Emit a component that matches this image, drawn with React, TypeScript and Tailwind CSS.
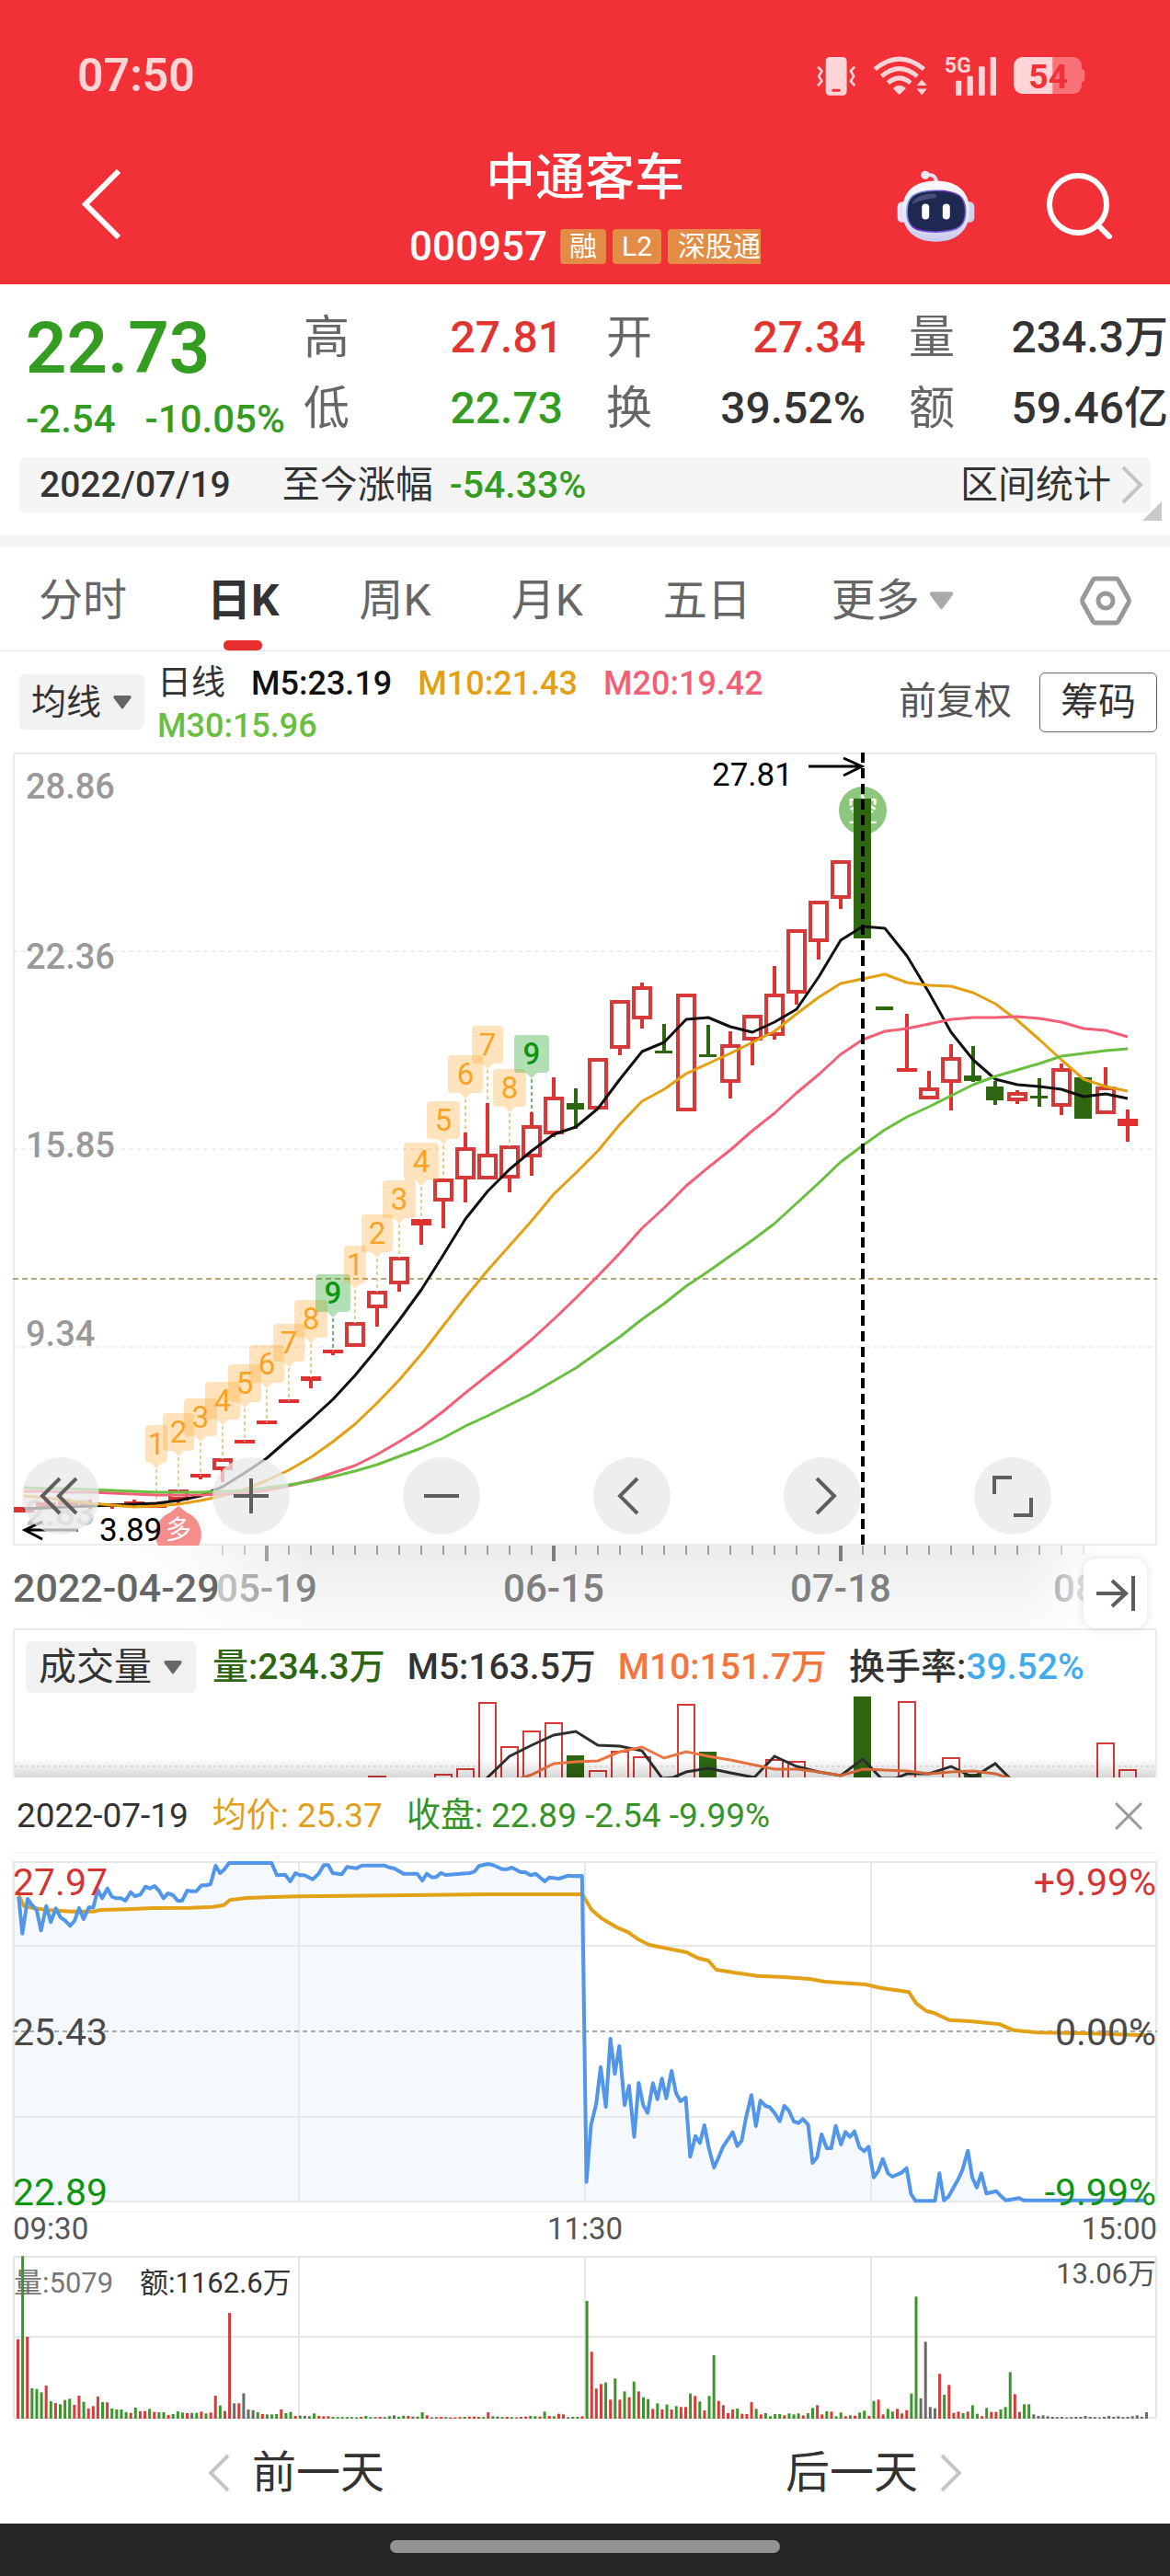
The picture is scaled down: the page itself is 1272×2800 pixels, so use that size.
import type { ReactNode } from "react";

/* ---------- daily candles ---------- */

const candleX = (i: number) => 26 + 24 * i;

// [index, colour, body top, body bottom, high, low]
type Candle = [number, "r" | "g", number, number, number, number];

const candles: Candle[] = [
  [0, "r", 1638, 1644, 1638, 1644],
  [1, "r", 1633, 1638, 1630, 1638],
  [2, "r", 1631, 1636, 1629, 1638],
  [3, "r", 1633, 1638, 1630, 1640],
  [4, "r", 1634, 1638, 1634, 1640],
  [5, "r", 1632, 1636, 1630, 1638],
  [6, "r", 1633, 1639, 1633, 1639],
  [7, "r", 1619, 1631, 1619, 1634],
  [8, "r", 1602, 1606, 1602, 1608],
  [9, "r", 1585, 1598, 1585, 1611],
  [10, "r", 1565, 1569, 1565, 1569],
  [11, "r", 1544, 1548, 1544, 1548],
  [12, "r", 1521, 1525, 1521, 1525],
  [13, "r", 1496, 1501, 1496, 1509],
  [14, "r", 1467, 1471, 1467, 1473],
  [15, "r", 1437, 1464, 1437, 1464],
  [16, "r", 1403, 1422, 1403, 1442],
  [17, "r", 1366, 1396, 1366, 1404],
  [18, "r", 1325, 1332, 1325, 1353],
  [19, "r", 1281, 1306, 1281, 1335],
  [20, "r", 1247, 1282, 1231, 1307],
  [21, "r", 1254, 1282, 1199, 1282],
  [22, "r", 1245, 1281, 1245, 1296],
  [23, "r", 1223, 1258, 1209, 1278],
  [24, "r", 1192, 1233, 1171, 1236],
  [25, "g", 1199, 1206, 1183, 1227],
  [26, "r", 1150, 1206, 1150, 1206],
  [27, "r", 1087, 1140, 1087, 1147],
  [28, "r", 1072, 1108, 1068, 1118],
  [29, "g", 1142, 1145, 1113, 1145],
  [30, "r", 1080, 1208, 1080, 1208],
  [31, "g", 1146, 1149, 1114, 1149],
  [32, "r", 1135, 1177, 1121, 1194],
  [33, "r", 1103, 1131, 1103, 1158],
  [34, "r", 1080, 1126, 1050, 1130],
  [35, "r", 1010, 1080, 1010, 1092],
  [36, "r", 979, 1024, 979, 1043],
  [37, "r", 935, 977, 935, 988],
  [38, "g", 868, 1020, 868, 1020],
  [39, "g", 1094, 1098, 1094, 1098],
  [40, "r", 1161, 1165, 1102, 1165],
  [41, "r", 1182, 1195, 1164, 1195],
  [42, "r", 1149, 1177, 1135, 1207],
  [43, "g", 1169, 1175, 1137, 1176],
  [44, "g", 1181, 1196, 1175, 1201],
  [45, "r", 1187, 1197, 1185, 1200],
  [46, "g", 1191, 1194, 1172, 1203],
  [47, "r", 1161, 1203, 1156, 1212],
  [48, "g", 1171, 1216, 1171, 1216],
  [49, "r", 1181, 1211, 1160, 1211],
  [50, "r", 1216, 1224, 1206, 1241],
];

// One value per candle.
const ma5 = [
  1640, 1639, 1638, 1637, 1636, 1635, 1634, 1631, 1626, 1616, 1601, 1585, 1564, 1543, 1521, 1495, 1466, 1435, 1402,
  1364, 1325, 1295, 1271, 1251, 1233, 1225, 1205, 1173, 1143, 1133, 1108, 1106, 1116, 1122, 1111, 1097, 1062, 1022,
  1007, 1009, 1039, 1079, 1122, 1152, 1173, 1179, 1181, 1184, 1192, 1189, 1194,
];
const ma10 = [
  1626, 1628, 1631, 1634, 1636, 1638, 1637, 1635, 1631, 1626, 1619, 1609, 1598, 1584, 1567, 1548, 1525, 1500, 1472,
  1441, 1410, 1381, 1354, 1327, 1298, 1275, 1251, 1222, 1197, 1184, 1167, 1156, 1145, 1133, 1121, 1102, 1084, 1069,
  1064, 1059, 1068, 1071, 1072, 1079, 1091, 1109, 1130, 1152, 1173, 1181, 1186,
];
const ma20 = [
  1621, 1621, 1622, 1622, 1623, 1624, 1625, 1625, 1625, 1624, 1623, 1620, 1615, 1609, 1601, 1593, 1581, 1567, 1552,
  1534, 1514, 1495, 1476, 1456, 1434, 1411, 1387, 1362, 1335, 1313, 1289, 1269, 1250, 1229, 1210, 1188, 1168, 1146,
  1130, 1121, 1118, 1113, 1108, 1106, 1106, 1105, 1107, 1111, 1118, 1120, 1127,
];
const ma30 = [
  1617, 1618, 1618, 1619, 1620, 1621, 1622, 1622, 1622, 1621, 1620, 1617, 1614, 1610, 1605, 1599, 1592, 1583, 1574,
  1563, 1550, 1539, 1527, 1515, 1501, 1487, 1470, 1453, 1434, 1417, 1398, 1382, 1365, 1348, 1330, 1308, 1286, 1263,
  1245, 1228, 1214, 1203, 1191, 1179, 1170, 1163, 1156, 1148, 1145, 1142, 1140,
];

const series = (values: number[]) => values.map((y, i) => `${candleX(i)},${y}`).join(" ");

// [index, digit, top, width]
const flags: [number, string, number, number][] = [
  [6, "1", 1549, 24],
  [7, "2", 1536, 34],
  [8, "3", 1520, 36],
  [9, "4", 1502, 38],
  [10, "5", 1483, 36],
  [11, "6", 1462, 38],
  [12, "7", 1439, 34],
  [13, "8", 1413, 36],
  [14, "9", 1385, 38],
  [15, "1", 1354, 24],
  [16, "2", 1320, 34],
  [17, "3", 1283, 36],
  [18, "4", 1242, 38],
  [19, "5", 1197, 36],
  [20, "6", 1147, 38],
  [21, "7", 1115, 34],
  [22, "8", 1162, 36],
  [23, "9", 1125, 38],
];

function Flag({ i, digit, top, width }: { i: number; digit: string; top: number; width: number }) {
  const x = candleX(i);
  const green = digit === "9";
  return (
    <g>
      <line
        x1={x}
        x2={x}
        y1={top + 48}
        y2={top + 84}
        stroke={green ? "#6fb574" : "#eccd8d"}
        strokeWidth={2}
        strokeDasharray="4 3"
      />
      <path
        fill={green ? "#16a01a" : "#ff9c12"}
        fillOpacity={green ? 0.33 : 0.28}
        d={`M${x - width / 2 + 4} ${top} h${width - 8} q4 0 4 4 v33 q0 4 -4 4 h${-(width - 20) / 2} L${x} ${top + 47} L${x - 6} ${top + 41} h${-(width - 20) / 2} q-4 0 -4 -4 v-33 q0 -4 4 -4 z`}
      />
      <text
        x={x}
        y={top + 32}
        textAnchor="middle"
        fontSize={33}
        fontWeight={green ? 500 : 400}
        fill={green ? "#0d960d" : "#f7a325"}
      >
        {digit}
      </text>
    </g>
  );
}

function CandleShape({ c }: { c: Candle }) {
  const [i, kind, top, bottom, high, low] = c;
  const x = candleX(i);
  const color = kind === "r" ? "#e0302f" : "#2e6612";
  const hollow = kind === "r" && bottom - top > 9;
  return (
    <g>
      {high < top && <line x1={x} x2={x} y1={high} y2={top} stroke={color} strokeWidth={4} />}
      {low > bottom && <line x1={x} x2={x} y1={bottom} y2={low} stroke={color} strokeWidth={4} />}
      {hollow ? (
        <rect
          x={x - 9}
          y={top + 2}
          width={18}
          height={bottom - top - 4}
          fill="#fff"
          stroke="#d63a38"
          strokeWidth={4}
        />
      ) : (
        <rect
          x={x - (kind === "r" ? 11 : 10)}
          y={top}
          width={kind === "r" ? 22 : 19}
          height={bottom - top}
          fill={color}
        />
      )}
    </g>
  );
}

const priceAxis: [string, number][] = [
  ["28.86", 868],
  ["22.36", 1053],
  ["15.85", 1258],
  ["9.34", 1463],
  ["2.83", 1658],
];

function CandleChart() {
  return (
    <svg
      viewBox="0 818 1272 862"
      className="block h-auto w-full"
      fontFamily="Roboto, 'Noto Sans CJK SC', sans-serif"
      role="img"
      aria-label="日K线图"
    >
      <rect x={15} y={819} width={1242} height={860} fill="#fff" stroke="#ececec" strokeWidth={2} />
      {[1034, 1249, 1464].map((y) => (
        <line key={y} x1={14} x2={1258} y1={y} y2={y} stroke="#dedede" strokeDasharray="5 4" />
      ))}
      <line x1={14} x2={1258} y1={1390} y2={1390} stroke="#b9a67a" strokeWidth={2} strokeDasharray="6 4" />
      {priceAxis.map(([label, y]) => (
        <text key={label} x={28} y={y} fontSize={38} fontWeight={500} fill={label === "2.83" ? "#c4c4c4" : "#999"}>
          {label}
        </text>
      ))}

      <circle cx={938} cy={881} r={26} fill="#8dc67f" />
      <text x={938} y={893} textAnchor="middle" fontSize={34} fill="#fff">
        空
      </text>
      <path d="M194 1637 L203 1644 A26 26 0 0 1 216 1680 H172 A26 26 0 0 1 185 1644 Z" fill="#f58d8b" />
      <text x={194} y={1673} textAnchor="middle" fontSize={28} fill="#fff">
        多
      </text>

      {candles.map((c) => (
        <CandleShape key={c[0]} c={c} />
      ))}
      {flags.map(([i, digit, top, width]) => (
        <Flag key={i} i={i} digit={digit} top={top} width={width} />
      ))}

      <g fill="none" strokeWidth={3} strokeLinejoin="round">
        <polyline points={series(ma5)} stroke="#111" />
        <polyline points={series(ma10)} stroke="#e3a013" />
        <polyline points={series(ma20)} stroke="#f25f76" />
        <polyline points={series(ma30)} stroke="#6abf40" />
      </g>

      <line x1={938} x2={938} y1={818} y2={1680} stroke="#000" strokeWidth={4} strokeDasharray="11 6" />
      <g fill="#000" fontSize={35}>
        <text x={774} y={854}>
          27.81
        </text>
        <text x={108} y={1675}>
          3.89
        </text>
      </g>
      <g fill="none" stroke="#000" strokeWidth={3}>
        <path d="M879 833 H936 M917 824 L937 833 L917 843" />
        <path d="M85 1663 H28 M46 1654 L27 1663 L46 1673" />
      </g>
    </svg>
  );
}

function TimeAxis() {
  const major = [11, 24, 37];
  const ticks = Array.from({ length: 40 }, (_, k) => k + 9);
  return (
    <svg
      viewBox="0 1680 1272 90"
      className="block h-auto w-full"
      fontFamily="Roboto, 'Noto Sans CJK SC', sans-serif"
      fontSize={42}
      role="img"
      aria-label="时间轴"
    >
      <defs>
        <linearGradient id="axisDown" x1="0" y1="0" x2="0" y2="1">
          <stop offset="0" stopColor="#ececec" />
          <stop offset="1" stopColor="#fbfbfb" />
        </linearGradient>
        <linearGradient id="axisLeft" x1="0" x2="1">
          <stop offset="0" stopColor="#fff" />
          <stop offset="0.55" stopColor="#fff" stopOpacity="0.85" />
          <stop offset="1" stopColor="#fff" stopOpacity="0" />
        </linearGradient>
        <linearGradient id="axisRight" x1="0" x2="1">
          <stop offset="0" stopColor="#fff" stopOpacity="0" />
          <stop offset="1" stopColor="#fff" />
        </linearGradient>
      </defs>
      <rect x={0} y={1680} width={1272} height={90} fill="url(#axisDown)" />
      {ticks.map((i) =>
        major.includes(i) ? (
          <line key={i} x1={candleX(i)} x2={candleX(i)} y1={1680} y2={1697} stroke="#7d7d7d" strokeWidth={4} />
        ) : (
          <line key={i} x1={candleX(i)} x2={candleX(i)} y1={1680} y2={1690} stroke="#9b9b9b" strokeWidth={2} />
        ),
      )}
      <g fill="#808080" fontWeight={500} textAnchor="middle">
        <text x={290} y={1741}>
          05-19
        </text>
        <text x={602} y={1741}>
          06-15
        </text>
        <text x={914} y={1741}>
          07-18
        </text>
        <text x={1200} y={1741}>
          08-12
        </text>
      </g>
      <rect x={0} y={1680} width={340} height={90} fill="url(#axisLeft)" />
      <rect x={1110} y={1680} width={90} height={90} fill="url(#axisRight)" />
      <rect x={1200} y={1680} width={72} height={90} fill="#fff" />
      <text x={14} y={1741} fontWeight={500} fontSize={43} fill="#666">
        2022-04-29
      </text>
    </svg>
  );
}

/* ---------- daily volume ---------- */

const dailyVolume: [number, "r" | "g", number][] = [
  [16, "r", 1930],
  [19, "r", 1928],
  [20, "r", 1922],
  [21, "r", 1850],
  [22, "r", 1898],
  [23, "r", 1881],
  [24, "r", 1872],
  [25, "g", 1908],
  [26, "r", 1924],
  [27, "r", 1903],
  [28, "r", 1909],
  [30, "r", 1852],
  [31, "g", 1904],
  [34, "r", 1912],
  [35, "r", 1914],
  [38, "g", 1844],
  [40, "r", 1849],
  [42, "r", 1910],
  [43, "g", 1928],
  [49, "r", 1894],
  [50, "r", 1923],
];

function DailyVolume() {
  return (
    <svg viewBox="16 1840 1240 92" className="block h-auto w-full" role="img" aria-label="成交量">
      <defs>
        <linearGradient id="fold" x1="0" y1="0" x2="0" y2="1">
          <stop offset="0" stopColor="#000" stopOpacity="0" />
          <stop offset="1" stopColor="#000" stopOpacity="0.16" />
        </linearGradient>
      </defs>
      <line x1={16} x2={1256} y1={1920} y2={1920} stroke="#cfcfcf" strokeDasharray="3 3" />
      {dailyVolume.map(([i, kind, top]) =>
        kind === "g" ? (
          <rect key={i} x={candleX(i) - 10} y={top} width={19} height={110} fill="#2e6612" />
        ) : (
          <rect
            key={i}
            x={candleX(i) - 9}
            y={top + 1}
            width={18}
            height={110}
            fill="#fff"
            stroke="#d63a38"
            strokeWidth={2}
          />
        ),
      )}
      <g fill="none" strokeWidth={3}>
        <polyline
          stroke="#2f2f2f"
          points="529,1933 554,1909 578,1897 602,1886 626,1882 650,1897 674,1898 698,1903 720,1933 732,1932 746,1926 770,1922 794,1927 820,1932 842,1909 866,1920 890,1926 914,1930 938,1912 958,1933 974,1933 986,1928 1010,1928 1034,1920 1058,1932 1082,1917 1098,1933"
        />
        <polyline
          stroke="#ee7540"
          points="566,1933 578,1929 602,1917 626,1915 650,1914 674,1904 698,1899 722,1911 746,1904 770,1909 794,1913 818,1918 842,1923 866,1923 890,1926 914,1930 938,1923 962,1924 986,1925 1010,1928 1034,1926 1058,1925 1082,1928 1098,1933"
        />
      </g>
      <rect x={16} y={1912} width={1240} height={20} fill="url(#fold)" />
    </svg>
  );
}

/* ---------- intraday ---------- */

// Samples as "x y" on a 1568 x 1560 plotting grid.
const priceSamples =
  "25 425,30 545,37 432,42 450,49 468,55 535,62 455,68 508,75 463,81 492,87 502,94 520,100 503,106 462,112 498,119 460,125 460,131 403,137 430,144 398,150 425,156 430,162 430,168 438,175 410,181 423,188 418,195 392,201 398,207 390,213 405,219 430,225 414,232 420,238 438,244 438,251 405,257 407,263 407,270 388,276 388,282 384,289 324,295 348,301 335,307 315,364 315,371 355,382 353,389 375,396 348,402 355,408 355,419 368,427 350,434 322,440 322,446 348,458 352,465 328,478 332,485 323,515 323,522 330,528 332,541 350,559 350,566 372,572 350,579 362,585 360,591 347,597 354,629 348,636 343,642 325,654 318,661 322,673 335,680 335,686 330,698 345,704 345,711 355,718 350,730 375,736 362,749 366,762 356,768 358,780 357,786 1355,792 1170,799 1100,805 980,812 1110,818 888,824 1003,830 912,837 1105,843 1042,850 1208,856 1032,862 1105,868 1130,875 1033,881 1085,887 1018,893 1082,900 993,906 1065,912 1092,919 1080,925 1273,932 1205,938 1228,944 1170,950 1245,957 1308,963 1275,969 1240,982 1193,988 1238,994 1220,1000 1143,1007 1072,1013 1173,1019 1090,1026 1107,1032 1112,1038 1130,1045 1157,1051 1107,1057 1122,1064 1158,1070 1163,1076 1150,1083 1168,1089 1293,1095 1275,1101 1200,1108 1245,1114 1245,1120 1172,1127 1233,1133 1192,1139 1208,1145 1190,1152 1243,1158 1255,1164 1240,1171 1340,1177 1320,1183 1280,1190 1327,1196 1338,1208 1325,1215 1310,1221 1395,1227 1417,1253 1417,1259 1327,1265 1415,1271 1403,1284 1347,1290 1315,1297 1253,1303 1340,1309 1373,1315 1327,1322 1393,1335 1385,1341 1400,1348 1415,1366 1408,1372 1415,1535 1415";

const averageSamples =
  "25 420,32 455,45 462,62 468,95 473,125 473,135 468,170 466,205 462,255 461,285 458,300 452,308 436,330 429,365 426,400 424,520 421,650 417,780 417,783 428,793 468,806 495,825 523,842 541,856 565,870 582,890 592,920 606,935 625,949 633,960 663,985 673,1015 683,1050 687,1085 693,1105 702,1160 711,1180 722,1218 736,1228 773,1241 797,1251 803,1272 827,1300 831,1340 841,1358 860,1390 868,1450 870,1500 874,1535 877";

const plot = (samples: string) =>
  samples
    .split(",")
    .map((pair) => {
      const [x, y] = pair.split(" ").map(Number);
      return `${((x * 1272) / 1568).toFixed(1)},${(1920 + y / 3).toFixed(1)}`;
    })
    .join(" ");

function IntradayChart() {
  const price = plot(priceSamples);
  return (
    <svg
      viewBox="0 2013 1272 392"
      className="block h-auto w-full"
      fontFamily="Roboto, sans-serif"
      fontSize={41}
      role="img"
      aria-label="分时图"
    >
      <rect x={14} y={2014} width={1244} height={390} fill="#fff" stroke="#f3f3f3" strokeWidth={1} />
      <polygon points={`15,2393 15,2061 ${price} 1245,2393`} fill="#f5f9fe" />
      <g stroke="#e6e8ea" strokeWidth={2}>
        <path d="M14 2024 H1258 M14 2115 H1258 M14 2301 H1258 M14 2393 H1258" />
        <path d="M15 2024 V2393 M325 2024 V2393 M636 2024 V2393 M947 2024 V2393 M1257 2024 V2393" />
      </g>
      <line x1={14} x2={1258} y1={2208} y2={2208} stroke="#a5a8ab" strokeWidth={2} strokeDasharray="5 4" />
      <polyline points={plot(averageSamples)} fill="none" stroke="#e3a118" strokeWidth={4} strokeLinejoin="round" />
      <polyline points={price} fill="none" stroke="#5196e8" strokeWidth={4} strokeLinejoin="round" />
      <text x={14} y={2060} fill="#d63434">
        27.97
      </text>
      <text x={14} y={2223} fill="#4a4a4a">
        25.43
      </text>
      <text x={14} y={2397} fill="#0e9410">
        22.89
      </text>
      <g textAnchor="end">
        <text x={1257} y={2060} fill="#d63434">
          +9.99%
        </text>
        <text x={1257} y={2223} fill="#4a4a4a">
          0.00%
        </text>
        <text x={1257} y={2397} fill="#0e9410">
          -9.99%
        </text>
      </g>
    </svg>
  );
}

// One bar per minute: colour letter and height.
const minuteVolume =
  "r259 g530 r267 g99 g97 g86 r108 g57 r51 g47 g61 g65 r45 r75 g55 r33 r41 r72 g54 r53 g33 g30 g30 g21 r19 g36 r24 r25 g32 r22 g21 g21 r12 g15 g24 g20 r18 k19 g19 r23 g17 r20 r75 g43 r25 r345 k50 r50 k83 k30 k28 g21 r15 g14 g14 g15 r30 g18 g22 r9 g10 k9 g8 g17 r9 r8 r8 g6 g5 k5 g5 g5 g4 r6 g9 g5 k5 r6 k5 g8 k11 g6 g10 r9 k7 g7 g21 r11 k4 r5 r6 g5 r4 r4 r5 g6 r7 r7 r6 g5 r21 g8 k7 g5 r6 g5 r4 k6 r7 g9 g8 r7 g23 r9 g8 r16 r14 k5 g6 g6 r8 g384 r218 r98 r113 g118 r62 g131 r62 g89 r70 g121 r89 g70 g64 r32 g50 r30 g46 r30 g41 r38 r38 g82 r74 g56 r27 g74 g207 r58 r44 r18 r30 g33 r16 r15 r54 g32 r14 g18 g8 g15 g15 r11 g17 g14 g17 r11 g18 g35 r44 r14 g24 r23 g8 g20 r8 g11 r10 g20 g26 r9 g58 r62 r14 g32 g23 r32 r17 r28 g82 g398 k66 k251 k38 k34 r146 g78 r110 r19 r23 g18 r23 g44 g16 r8 g35 r22 r22 g30 g38 g152 r80 r22 g47 g47 k14 k9 k11 k8 k6 k5 k6 k4 k5 k6 k6 k9 k6 k5 k4 k6 k9 k6 k8 k5 k6 k8 k11 k6 k21";

const barColor: Record<string, string> = { r: "#d93a38", g: "#3a962a", k: "#6a6a6a" };

function MinuteVolume() {
  const bars = minuteVolume.split(" ");
  return (
    <svg
      viewBox="0 2452 1272 178"
      className="block h-auto w-full"
      fontFamily="Roboto, 'Noto Sans CJK SC', sans-serif"
      fontSize={31}
      role="img"
      aria-label="分时成交量"
    >
      <g stroke="#e6e6e6" strokeWidth={2} fill="none">
        <rect x={15} y={2453} width={1242} height={175} />
        <path d="M14 2540 H1258 M325 2452 V2629 M636 2452 V2629 M947 2452 V2629" />
      </g>
      <text x={15} y={2492} fill="#777">
        量:5079
      </text>
      <text x={152} y={2492} fill="#333">
        额:1162.6万
      </text>
      <text x={1257} y={2482} textAnchor="end" fill="#555">
        13.06万
      </text>
      {bars.map((bar, n) => {
        const slot = n === bars.length - 1 ? 240 : n;
        const height = Number(bar.slice(1)) / 3;
        return (
          <rect
            key={n}
            x={18 + (slot * 1227) / 240}
            y={2629 - height}
            width={3}
            height={height}
            fill={barColor[bar[0]]}
          />
        );
      })}
    </svg>
  );
}

/* ---------- icons ---------- */

function VibrateIcon() {
  return (
    <svg viewBox="52 60 132 130" className="h-[43px] w-[44px]" aria-label="振动">
      <rect x={84} y={63} width={69} height={126} rx={13} fill="#fdd5d7" />
      <rect x={104} y={168} width={28} height={9} rx={4} fill="#f23038" />
      <path
        d="M58 95 L71 109 L61 126 L71 142 L58 157 M179 95 L166 109 L176 126 L166 142 L179 157"
        fill="none"
        stroke="#fdd5d7"
        strokeWidth={8}
        strokeLinejoin="round"
      />
    </svg>
  );
}

function WifiIcon() {
  return (
    <svg viewBox="242 60 180 130" className="h-[43px] w-[60px]" aria-label="无线网络">
      <g fill="none" stroke="#fdd5d7" strokeWidth={15}>
        <path d="M248 103 Q328 36 409 103" />
        <path d="M270 126 Q328 76 387 126" />
        <path d="M291 148 Q328 116 365 148" />
      </g>
      <path d="M307 166 Q328 146 350 166 L331 185 Q328 188 325 185 Z" fill="#fdd5d7" />
      <path d="M402 137 L419 157 H385 Z M385 167 H419 L402 188 Z" fill="#fdd5d7" />
    </svg>
  );
}

function SignalIcon() {
  return (
    <svg viewBox="468 57 170 133" className="h-[44px] w-[57px] overflow-visible" aria-label="5G">
      <text x={466} y={114} fontFamily="Roboto, sans-serif" fontSize={70} fontWeight={700} fill="#fdd5d7">
        5G
      </text>
      <g fill="#fdd5d7">
        <rect x={503} y={141} width={19} height={48} rx={3} />
        <rect x={541} y={126} width={19} height={63} rx={3} />
        <rect x={579} y={94} width={20} height={95} rx={3} />
        <rect x={617} y={63} width={19} height={126} rx={3} />
      </g>
    </svg>
  );
}

function BatteryIcon() {
  return (
    <svg viewBox="698 66 234 126" className="h-[42px] w-[78px] overflow-visible" aria-label="电量 54">
      <rect x={699} y={69} width={221} height={120} rx={28} fill="#f97277" />
      <path d="M918 107 q12 2 12 12 v20 q0 10 -12 12 z" fill="#f97277" />
      <path d="M825 69 H727 a28 28 0 0 0 -28 28 v64 a28 28 0 0 0 28 28 H825 Z" fill="#fdd5d7" />
      <text
        x={811}
        y={170}
        textAnchor="middle"
        fontFamily="Roboto, sans-serif"
        fontSize={112}
        fontWeight={700}
        fill="#f23038"
      >
        54
      </text>
    </svg>
  );
}

function RobotIcon() {
  return (
    <svg viewBox="313 427 256 235" className="h-[78px] w-[85px]" aria-hidden="true">
      <defs>
        <linearGradient id="shell" x1="0" y1="0" x2="0" y2="1">
          <stop offset="0" stopColor="#fbfafd" />
          <stop offset="0.6" stopColor="#e6e5f6" />
          <stop offset="1" stopColor="#c9caed" />
        </linearGradient>
        <linearGradient id="rim" x1="0" y1="0" x2="1" y2="0.5">
          <stop offset="0" stopColor="#8fd8e6" />
          <stop offset="0.5" stopColor="#6a2fc0" />
          <stop offset="1" stopColor="#7a5fe0" />
        </linearGradient>
      </defs>
      <path d="M406 443 Q440 436 443 468" fill="none" stroke="#e3e0f5" strokeWidth={12} />
      <circle cx={406} cy={443} r={14} fill="#ece8f6" />
      <rect x={315} y={530} width={36} height={68} rx={16} fill="#e3e0f3" />
      <rect x={531} y={530} width={36} height={68} rx={16} fill="#d5d0ee" />
      <path
        d="M441 462 C520 462 551 505 551 562 C551 622 510 661 441 661 C372 661 331 622 331 562 C331 505 362 462 441 462 Z"
        fill="url(#shell)"
      />
      <path
        d="M441 494 C516 494 538 515 538 562 C538 609 516 629 441 629 C366 629 346 609 346 562 C346 515 366 494 441 494 Z"
        fill="#1f2850"
        stroke="url(#rim)"
        strokeWidth={5}
      />
      <path d="M362 540 Q372 508 425 504 Q452 504 440 518 Q396 520 362 540 Z" fill="#48507a" />
      <rect x={395} y={537} width={24} height={51} rx={12} fill="#fff" />
      <rect x={463} y={537} width={24} height={51} rx={12} fill="#fff" />
    </svg>
  );
}

function Caret({ className }: { className: string }) {
  return (
    <svg viewBox="0 0 22 16" className={className} aria-hidden="true">
      <path d="M2 0 H20 Q22 1 21 3 L12 15 Q11 16 10 15 L1 3 Q0 1 2 0 Z" fill="currentColor" />
    </svg>
  );
}

function Chevron({ dir, className }: { dir: "left" | "right"; className: string }) {
  return (
    <svg viewBox="0 0 24 42" className={className} aria-hidden="true">
      <path
        d={dir === "left" ? "M22 2 L3 21 L22 40" : "M2 2 L21 21 L2 40"}
        fill="none"
        stroke="currentColor"
        strokeWidth={4}
      />
    </svg>
  );
}

/* ---------- page ---------- */

function Quote({ label, value, tone }: { label: string; value: string; tone: string }) {
  return (
    <div className="flex items-center justify-between whitespace-nowrap text-[48px] leading-[60px]">
      <dt className="text-[50px] text-[#666]">{label}</dt>
      <dd className={`font-medium ${tone}`}>{value}</dd>
    </div>
  );
}

function RoundButton({ label, children }: { label: string; children: ReactNode }) {
  return (
    <button
      type="button"
      aria-label={label}
      className="flex size-[84px] items-center justify-center rounded-full bg-[#e8e8e8]/75"
    >
      <svg viewBox="0 0 84 84" className="size-full" fill="none" stroke="#5e5e5e" strokeWidth={4}>
        {children}
      </svg>
    </button>
  );
}

const tabs = ["分时", "日K", "周K", "月K", "五日"];

export default function App() {
  return (
    <div className="flex w-full flex-col bg-white font-['Roboto','Noto_Sans_CJK_SC',sans-serif] text-[#333]">
      <header className="bg-[#f23038] pb-[17px] text-white">
        <div className="flex items-center justify-between pl-[84px] pr-[92px] pt-[58px]">
          <time className="text-[50px] font-semibold leading-[48px] text-[#fdd5d7]">07:50</time>
          <div className="flex items-center gap-[18px]">
            <VibrateIcon />
            <WifiIcon />
            <SignalIcon />
            <BatteryIcon />
          </div>
        </div>
        <div className="grid grid-cols-[1fr_auto_1fr] items-center pt-[58px]">
          <button type="button" aria-label="返回" className="ml-[88px] justify-self-start pb-3">
            <svg viewBox="0 0 44 76" className="h-[76px] w-[44px]" fill="none" stroke="#fff" strokeWidth={6}>
              <path d="M41 2 L5 38 L41 74" />
            </svg>
          </button>
          <div className="flex flex-col items-center gap-[20px]">
            <h1 className="text-[54px] font-medium leading-[60px]">中通客车</h1>
            <div className="flex items-center gap-[7px] text-[30px] leading-[38px]">
              <span className="mr-[7px] text-[44px] font-medium leading-[48px]">000957</span>
              <span className="rounded-[4px] bg-[#e28c46] px-[10px]">融</span>
              <span className="rounded-[4px] bg-[#e28c46] px-[10px]">L2</span>
              <span className="rounded-l-[4px] bg-[#e28c46] pl-[11px]">深股通</span>
            </div>
          </div>
          <div className="mr-[62px] flex items-center gap-[78px] justify-self-end pb-2">
            <button type="button" aria-label="智能助手">
              <RobotIcon />
            </button>
            <button type="button" aria-label="搜索">
              <svg viewBox="0 0 72 72" className="size-[72px]" fill="none" stroke="#fff" strokeWidth={6}>
                <circle cx={34} cy={34} r={31} />
                <path d="M55 56 L68 69" strokeLinecap="round" />
              </svg>
            </button>
          </div>
        </div>
      </header>

      <section className="relative border-b-[14px] border-[#f4f4f4] pb-6 pt-7">
        <div className="flex">
          <div className="flex w-[330px] flex-col gap-2 pl-[28px] text-[#359c22]">
            <strong className="text-[78px] font-semibold leading-[84px]">22.73</strong>
            <div className="flex gap-[32px] whitespace-nowrap text-[42px] font-medium leading-[54px]">
              <span>-2.54</span>
              <span>-10.05%</span>
            </div>
          </div>
          <dl className="grid flex-1 grid-cols-3 content-start gap-x-[47px] gap-y-[17px] pr-[2px]">
            <Quote label="高" value="27.81" tone="text-[#e13532]" />
            <Quote label="开" value="27.34" tone="text-[#e13532]" />
            <Quote label="量" value="234.3万" tone="text-[#333]" />
            <Quote label="低" value="22.73" tone="text-[#359c22]" />
            <Quote label="换" value="39.52%" tone="text-[#333]" />
            <Quote label="额" value="59.46亿" tone="text-[#333]" />
          </dl>
        </div>
        <div className="mx-[21px] mt-[14px] flex items-center rounded-[6px] bg-[#f5f5f5] pl-[22px] pr-2 text-[41px] leading-[60px]">
          <span className="mr-[56px] text-[39px] font-medium">2022/07/19</span>
          <span className="mr-[18px]">至今涨幅</span>
          <span className="font-medium text-[#359c22]">-54.33%</span>
          <a href="#range" className="ml-auto flex items-center gap-[11px]">
            区间统计
            <Chevron dir="right" className="h-[42px] w-[24px] text-[#c4c4c4]" />
          </a>
        </div>
        <svg viewBox="0 0 21 21" className="absolute bottom-[15px] right-[9px] size-[21px]" aria-hidden="true">
          <path d="M21 0 V21 H0 Z" fill="#c9c9c9" />
        </svg>
      </section>

      <nav className="flex items-start border-b border-[#e2e2e2] pl-[42px] pr-[41px] pt-[30px] text-[48px] leading-[56px] text-[#666]">
        <div className="flex gap-[87px]">
          {tabs.map((tab) => (
            <button
              key={tab}
              type="button"
              className={
                tab === "日K"
                  ? "flex flex-col items-center gap-[15px] font-bold text-[#333] after:h-[11px] after:w-[42px] after:rounded-[5px] after:bg-[#e62f2e]"
                  : "flex flex-col items-center"
              }
            >
              {tab}
            </button>
          ))}
          <button type="button" className="flex items-center gap-[10px] self-start">
            更多
            <Caret className="h-[22px] w-[27px] text-[#aaa]" />
          </button>
        </div>
        <button type="button" aria-label="设置" className="ml-auto">
          <svg viewBox="0 0 58 56" className="h-[56px] w-[58px]" fill="none" stroke="#999" strokeWidth={5}>
            <path d="M18 4 H40 Q42 4 43 6 L54 26 Q55 28 54 30 L43 50 Q42 52 40 52 H18 Q16 52 15 50 L4 30 Q3 28 4 26 L15 6 Q16 4 18 4 Z" />
            <circle cx={29} cy={28} r={8} />
          </svg>
        </button>
      </nav>

      <div className="flex items-center px-[14px] py-[6px]">
        <button
          type="button"
          className="ml-[7px] flex items-center gap-[12px] whitespace-nowrap rounded-[6px] bg-[#f2f2f2] px-[13px] text-[38px] leading-[60px]"
        >
          均线
          <Caret className="h-[15px] w-[22px] text-[#666]" />
        </button>
        <div className="ml-[14px] flex flex-1 flex-wrap gap-x-[28px] pt-[6px] text-[36px] leading-[46px]">
          <span className="text-[37px]">日线</span>
          <span className="font-medium text-[#111]">M5:23.19</span>
          <span className="font-medium text-[#e3a013]">M10:21.43</span>
          <span className="font-medium text-[#f25f76]">M20:19.42</span>
          <span className="font-medium text-[#6abf40]">M30:15.96</span>
        </div>
        <div className="flex items-center gap-[30px] whitespace-nowrap text-[41px]">
          <button type="button" className="text-[#555]">
            前复权
          </button>
          <button type="button" className="rounded-[6px] border border-[#666] px-[22px] leading-[63px]">
            筹码
          </button>
        </div>
      </div>

      <div className="relative">
        <CandleChart />
        <div className="absolute bottom-[12px] left-[24px] flex gap-[123px]">
          <RoundButton label="最左">
            <path d="M41 23 L22 42 L41 61 M59 23 L40 42 L59 61" />
          </RoundButton>
          <RoundButton label="放大">
            <path d="M23 42 H61 M42 23 V61" />
          </RoundButton>
          <RoundButton label="缩小">
            <path d="M23 42 H61" />
          </RoundButton>
          <RoundButton label="向左">
            <path d="M48 23 L29 42 L48 61" />
          </RoundButton>
          <RoundButton label="向右">
            <path d="M36 23 L55 42 L36 61" />
          </RoundButton>
          <RoundButton label="全屏">
            <path d="M22 40 V22 H41 M43 63 H62 V44" />
          </RoundButton>
        </div>
      </div>

      <div className="relative">
        <TimeAxis />
        <button
          type="button"
          aria-label="最新"
          className="absolute right-[25px] top-[14px] rounded-[14px] bg-white px-[12px] py-[17px] shadow-[0_0_10px_rgba(0,0,0,0.12)]"
        >
          <svg viewBox="0 0 45 42" className="h-[42px] w-[45px]" fill="none" stroke="#5e5e5e" strokeWidth={4}>
            <path d="M2 21 H34 M19 7 L34 21 L19 35 M42 2 V40" />
          </svg>
        </button>
      </div>

      <section className="mx-[14px] border-x-2 border-t-2 border-[#ececec]">
        <div className="flex items-center gap-[24px] whitespace-nowrap pl-[12px] pt-[12px] text-[39px] font-medium leading-[56px]">
          <button
            type="button"
            className="-mr-[6px] flex items-center gap-[12px] rounded-[6px] bg-[#f1f1f1] px-[14px] text-[41px] font-normal"
          >
            成交量
            <Caret className="h-[15px] w-[22px] text-[#666]" />
          </button>
          <span className="text-[#2e6612]">量:234.3万</span>
          <span>M5:163.5万</span>
          <span className="text-[#f3743c]">M10:151.7万</span>
          <span>
            换手率:<span className="text-[#41abee]">39.52%</span>
          </span>
        </div>
        <DailyVolume />
      </section>

      <section className="bg-white">
        <div className="flex items-center gap-[26px] pb-[15px] pl-[18px] pr-[30px] pt-[18px] text-[37px] leading-[48px]">
          <span>2022-07-19</span>
          <span className="text-[#e0a01c]">均价: 25.37</span>
          <span className="text-[#35942a]">收盘: 22.89 -2.54 -9.99%</span>
          <button type="button" aria-label="关闭" className="ml-auto">
            <svg viewBox="0 0 30 30" className="size-[30px]" fill="none" stroke="#999" strokeWidth={3}>
              <path d="M1 1 L29 29 M29 1 L1 29" />
            </svg>
          </button>
        </div>
        <IntradayChart />
        <div className="grid grid-cols-3 px-[14px] text-[33px] leading-[36px] text-[#555]">
          <span>09:30</span>
          <span className="text-center">11:30</span>
          <span className="text-right">15:00</span>
        </div>
        <div className="pt-[11px]">
          <MinuteVolume />
        </div>
        <div className="grid grid-cols-2 justify-items-center px-2 pb-[25px] pt-7 text-[48px] leading-[60px]">
          <button type="button" className="flex items-center gap-[24px]">
            <Chevron dir="left" className="h-[42px] w-[24px] text-[#c8c8c8]" />
            前一天
          </button>
          <button type="button" className="flex items-center gap-[24px]">
            后一天
            <Chevron dir="right" className="h-[42px] w-[24px] text-[#c8c8c8]" />
          </button>
        </div>
      </section>

      <footer className="flex justify-center bg-[#252525] pb-[25px] pt-[18px]">
        <div className="h-[14px] w-1/3 rounded-full bg-[#939393]" />
      </footer>
    </div>
  );
}
